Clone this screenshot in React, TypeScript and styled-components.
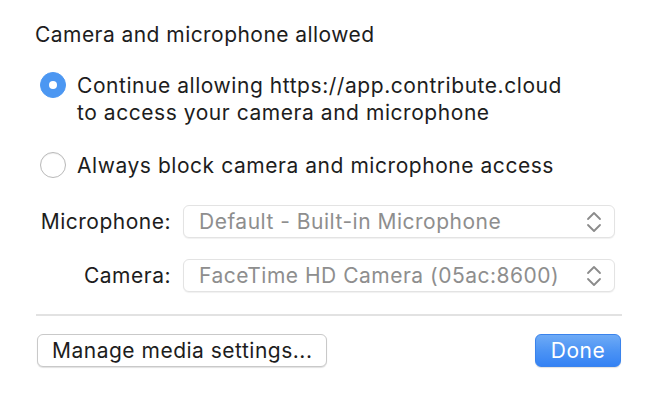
import React, { useState } from 'react';
import styled, { createGlobalStyle } from 'styled-components';

const GlobalStyle = createGlobalStyle`
  html, body {
    margin: 0;
    padding: 0;
    background: #ffffff;
  }
  body {
    font-family: Inter, "Liberation Sans", Arial, sans-serif;
    color: #1d1d1d;
    -webkit-font-smoothing: antialiased;
  }
`;

const Dialog = styled.div`
  width: 656px;
  height: 402px;
  box-sizing: border-box;
  padding: 21px 34px 0 36px;
  display: flex;
  flex-direction: column;
`;

const Title = styled.div`
  font-size: 21px;
  line-height: 28px;
  letter-spacing: 0.45px;
  margin-left: -1px;
`;

const RadioGroup = styled.div`
  display: flex;
  flex-direction: column;
  gap: 26px;
  margin-top: 23px;
  margin-left: 4px;
`;

const Option = styled.label`
  display: flex;
  align-items: flex-start;
  gap: 11px;
  font-size: 21px;
  line-height: 27px;
  letter-spacing: 0.55px;
  cursor: default;
`;

const RadioDot = styled.span<{ checked: boolean }>`
  flex: none;
  width: 26px;
  height: 26px;
  border-radius: 50%;
  box-sizing: border-box;
  display: flex;
  align-items: center;
  justify-content: center;
  background: ${({ checked }) => (checked ? '#4c97f2' : '#ffffff')};
  border: 1px solid ${({ checked }) => (checked ? '#4c97f2' : '#b9b9b9')};
  box-shadow: ${({ checked }) => (checked ? 'none' : 'inset 0 1px 1px rgba(0,0,0,0.06)')};

  &::after {
    content: '';
    display: ${({ checked }) => (checked ? 'block' : 'none')};
    width: 8px;
    height: 8px;
    border-radius: 50%;
    background: #ffffff;
  }
`;

const DeviceGrid = styled.div`
  display: grid;
  grid-template-columns: 135px 1fr;
  column-gap: 12px;
  row-gap: 21px;
  align-items: center;
  margin-top: 26px;
  margin-right: 7px;
`;

const DeviceLabel = styled.div`
  text-align: right;
  font-size: 21px;
  letter-spacing: 0.5px;
`;

const SelectBox = styled.div`
  height: 33px;
  box-sizing: border-box;
  border: 1px solid #e3e3e3;
  border-radius: 6px;
  background: #ffffff;
  box-shadow: 0 1px 1px rgba(0, 0, 0, 0.06);
  display: flex;
  align-items: center;
  padding: 0 12px 0 15px;
  font-size: 21px;
  letter-spacing: 0.5px;
  color: #8e8e8e;
`;

const SelectText = styled.span`
  flex: 1;
  white-space: nowrap;
`;

const Separator = styled.div`
  height: 2px;
  background: #e2e2e2;
  margin-top: 22px;
`;

const Footer = styled.div`
  display: flex;
  justify-content: space-between;
  align-items: center;
  margin-top: 18px;
  margin-left: 1px;
  margin-right: 1px;
`;

const Button = styled.button<{ primary?: boolean }>`
  height: 33px;
  box-sizing: border-box;
  border-radius: 6px;
  font-family: inherit;
  font-size: 21px;
  letter-spacing: 0.5px;
  padding: 0 14px;
  cursor: default;
  border: 1px solid ${({ primary }) => (primary ? '#3a83ec' : '#c9c9c9')};
  color: ${({ primary }) => (primary ? '#ffffff' : '#1d1d1d')};
  background: ${({ primary }) =>
    primary ? 'linear-gradient(to bottom, #6eabf6 0%, #4d94f4 50%, #3482f4 100%)' : '#ffffff'};
  box-shadow: 0 1px 1px rgba(0, 0, 0, 0.12);
  min-width: ${({ primary }) => (primary ? '86px' : '0')};
`;

const Chevrons = () => (
  <svg width="16" height="22" viewBox="0 0 16 22" fill="none">
    <path d="M2 8 L8 2 L14 8" stroke="#8b8b8b" strokeWidth="1.8" strokeLinecap="round" strokeLinejoin="round" />
    <path d="M2 14 L8 20 L14 14" stroke="#8b8b8b" strokeWidth="1.8" strokeLinecap="round" strokeLinejoin="round" />
  </svg>
);

export default function App() {
  const [choice, setChoice] = useState<'allow' | 'block'>('allow');

  return (
    <>
      <GlobalStyle />
      <Dialog>
        <Title>Camera and microphone allowed</Title>

        <RadioGroup>
          <Option onClick={() => setChoice('allow')}>
            <RadioDot checked={choice === 'allow'} />
            <span>
              Continue allowing https://app.contribute.cloud
              <br />
              to access your camera and microphone
            </span>
          </Option>
          <Option onClick={() => setChoice('block')}>
            <RadioDot checked={choice === 'block'} />
            <span>Always block camera and microphone access</span>
          </Option>
        </RadioGroup>

        <DeviceGrid>
          <DeviceLabel>Microphone:</DeviceLabel>
          <SelectBox>
            <SelectText>Default - Built-in Microphone</SelectText>
            <Chevrons />
          </SelectBox>
          <DeviceLabel>Camera:</DeviceLabel>
          <SelectBox>
            <SelectText>FaceTime HD Camera (05ac:8600)</SelectText>
            <Chevrons />
          </SelectBox>
        </DeviceGrid>

        <Separator />

        <Footer>
          <Button>Manage media settings...</Button>
          <Button primary>Done</Button>
        </Footer>
      </Dialog>
    </>
  );
}
